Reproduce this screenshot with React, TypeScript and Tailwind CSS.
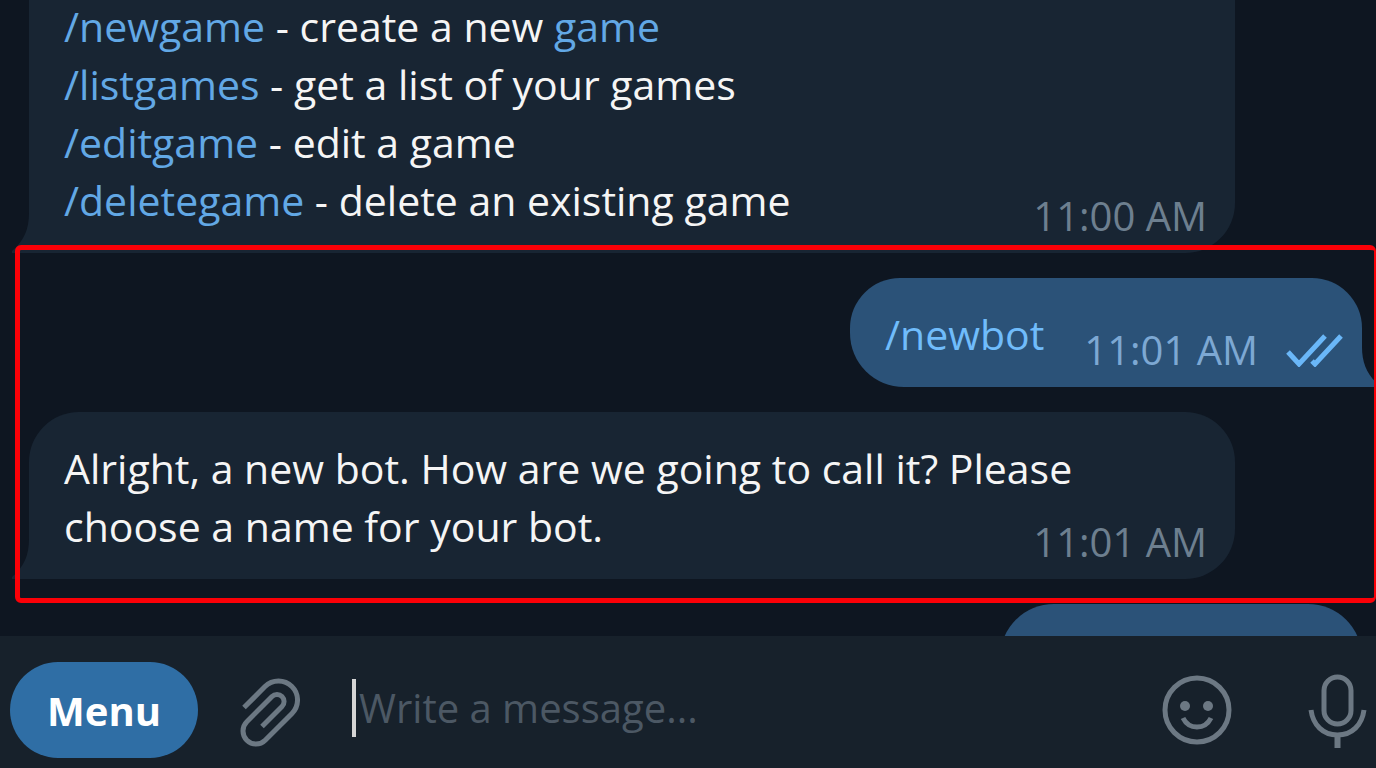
import type { ReactNode } from 'react';

const commands = [
  { name: '/newgame', text: 'create a new ', link: 'game' },
  { name: '/listgames', text: 'get a list of your games' },
  { name: '/editgame', text: 'edit a game' },
  { name: '/deletegame', text: 'delete an existing game' },
];

function Tail({ className }: { className: string }) {
  return (
    <svg className={className} width="18" height="40" viewBox="0 0 18 40" fill="currentColor" aria-hidden="true">
      <path d="M18 0 V40 H0 V38 C12 28 17 16 17 0 Z" />
    </svg>
  );
}

function Checks() {
  return (
    <svg
      width="57"
      height="34"
      viewBox="0 0 57 34"
      fill="none"
      stroke="currentColor"
      strokeWidth="5"
      className="text-[#6ab7f8]"
      aria-label="Read"
    >
      <path d="M2 19 L13 31 L39 3" />
      <path d="M26 28 L29 31 L55 3" />
    </svg>
  );
}

function Incoming({ time, className, children }: { time: string; className: string; children: ReactNode }) {
  return (
    <div className={`relative ml-[29px] mr-[141px] bg-[#182533] pl-[35px] pr-[30px] pb-6 rounded-br-[50px] ${className}`}>
      {children}
      <time className="absolute bottom-2 right-7 text-[40px] text-[#6d7f8f]">{time}</time>
      <Tail className="absolute bottom-0 -left-[17px] text-[#182533]" />
    </div>
  );
}

export default function App() {
  return (
    <div
      className="flex h-screen flex-col overflow-hidden bg-[#0e1621] text-[41px] leading-[58px] text-[#f5f5f5]"
      style={{ fontFamily: '"Open Sans", "Noto Sans", sans-serif' }}
    >
      <main className="flex min-h-0 flex-1 flex-col gap-[25px] overflow-hidden">
        <Incoming time="11:00 AM" className="shrink-0">
          <ul className="-mt-[3px]">
            {commands.map((c) => (
              <li key={c.name}>
                <a href="#" className="text-[#62a8e5]">{c.name}</a> - {c.text}
                {c.link && <a href="#" className="text-[#62a8e5]">{c.link}</a>}
              </li>
            ))}
          </ul>
        </Incoming>

        <section className="relative flex shrink-0 flex-col gap-[25px]">
          <div className="relative mr-[14px] flex items-start self-end rounded-t-[50px] rounded-bl-[54px] bg-[#2b5278] pt-[27px] pb-6 pl-[35px] pr-[19px]">
            <a href="#" className="text-[#70bcfb]">/newbot</a>
            <div className="ml-10 mt-4 -mb-4 flex items-center gap-7 text-[40px] text-[#7da8d3]">
              <time>11:01 AM</time>
              <Checks />
            </div>
            <Tail className="absolute bottom-0 -right-[17px] -scale-x-100 text-[#2b5278]" />
          </div>

          <Incoming time="11:01 AM" className="rounded-t-[50px] pt-[27px]">
            <p>Alright, a new bot. How are we going to call it? Please choose a name for your bot.</p>
          </Incoming>

          <div className="pointer-events-none absolute -top-[33px] -bottom-6 left-[15px] right-0 rounded-md border-[5px] border-r-2 border-[#fb0007]" />
        </section>

        <div className="mr-[14px] h-[109px] w-[362px] shrink-0 self-end rounded-[54px] bg-[#2b5278]" />
      </main>

      <footer className="flex h-[132px] shrink-0 items-center bg-[#17212b] pl-[10px] pr-[9px] pt-4 text-[40px] text-[#6c7883]">
        <button className="h-24 w-[188px] shrink-0 rounded-full bg-[#2f6ea5] pt-[2px] font-bold text-white">
          Menu
        </button>
        <button aria-label="Attach file" className="ml-[42px] shrink-0">
          <svg width="60" height="76" viewBox="0 -6 60 76" fill="none" stroke="currentColor" strokeWidth="5">
            <path d="M4 29.6 L25 8.6 A19 19 0 0 1 52 35.4 L25.2 62.2 A13 13 0 0 1 6.8 43.8 L32 18.5 A7 7 0 0 1 42 28.5 L22 48.5" />
          </svg>
        </button>
        <div className="relative mb-1 ml-[52px] min-w-0 flex-1">
          <input
            type="text"
            aria-label="Message"
            placeholder="Write a message..."
            className="block w-full bg-transparent pl-[7px] text-white outline-none placeholder:text-[#4c5864]"
          />
          <span className="absolute left-0 top-0 h-[58px] w-1 bg-[#d5d5d5]" />
        </div>
        <button aria-label="Emoji" className="shrink-0">
          <svg width="72" height="74" viewBox="0 0 72 74" fill="none" stroke="currentColor" strokeWidth="5">
            <circle cx="37" cy="37" r="32" />
            <circle cx="25" cy="33" r="5" fill="currentColor" stroke="none" />
            <circle cx="48" cy="33" r="5" fill="currentColor" stroke="none" />
            <path d="M23 45 C29 57 45 57 51 45" />
          </svg>
        </button>
        <button aria-label="Record voice message" className="ml-[75px] shrink-0">
          <svg width="60" height="76" viewBox="0 0 60 76" fill="none" stroke="currentColor" strokeWidth="5">
            <rect x="17" y="5" width="27" height="47" rx="13.5" />
            <path d="M4 38 C6 53 16 63 30.5 63 C45 63 55 53 57 38" />
            <path d="M30.5 63 V76" strokeWidth="6" />
          </svg>
        </button>
      </footer>
    </div>
  );
}
